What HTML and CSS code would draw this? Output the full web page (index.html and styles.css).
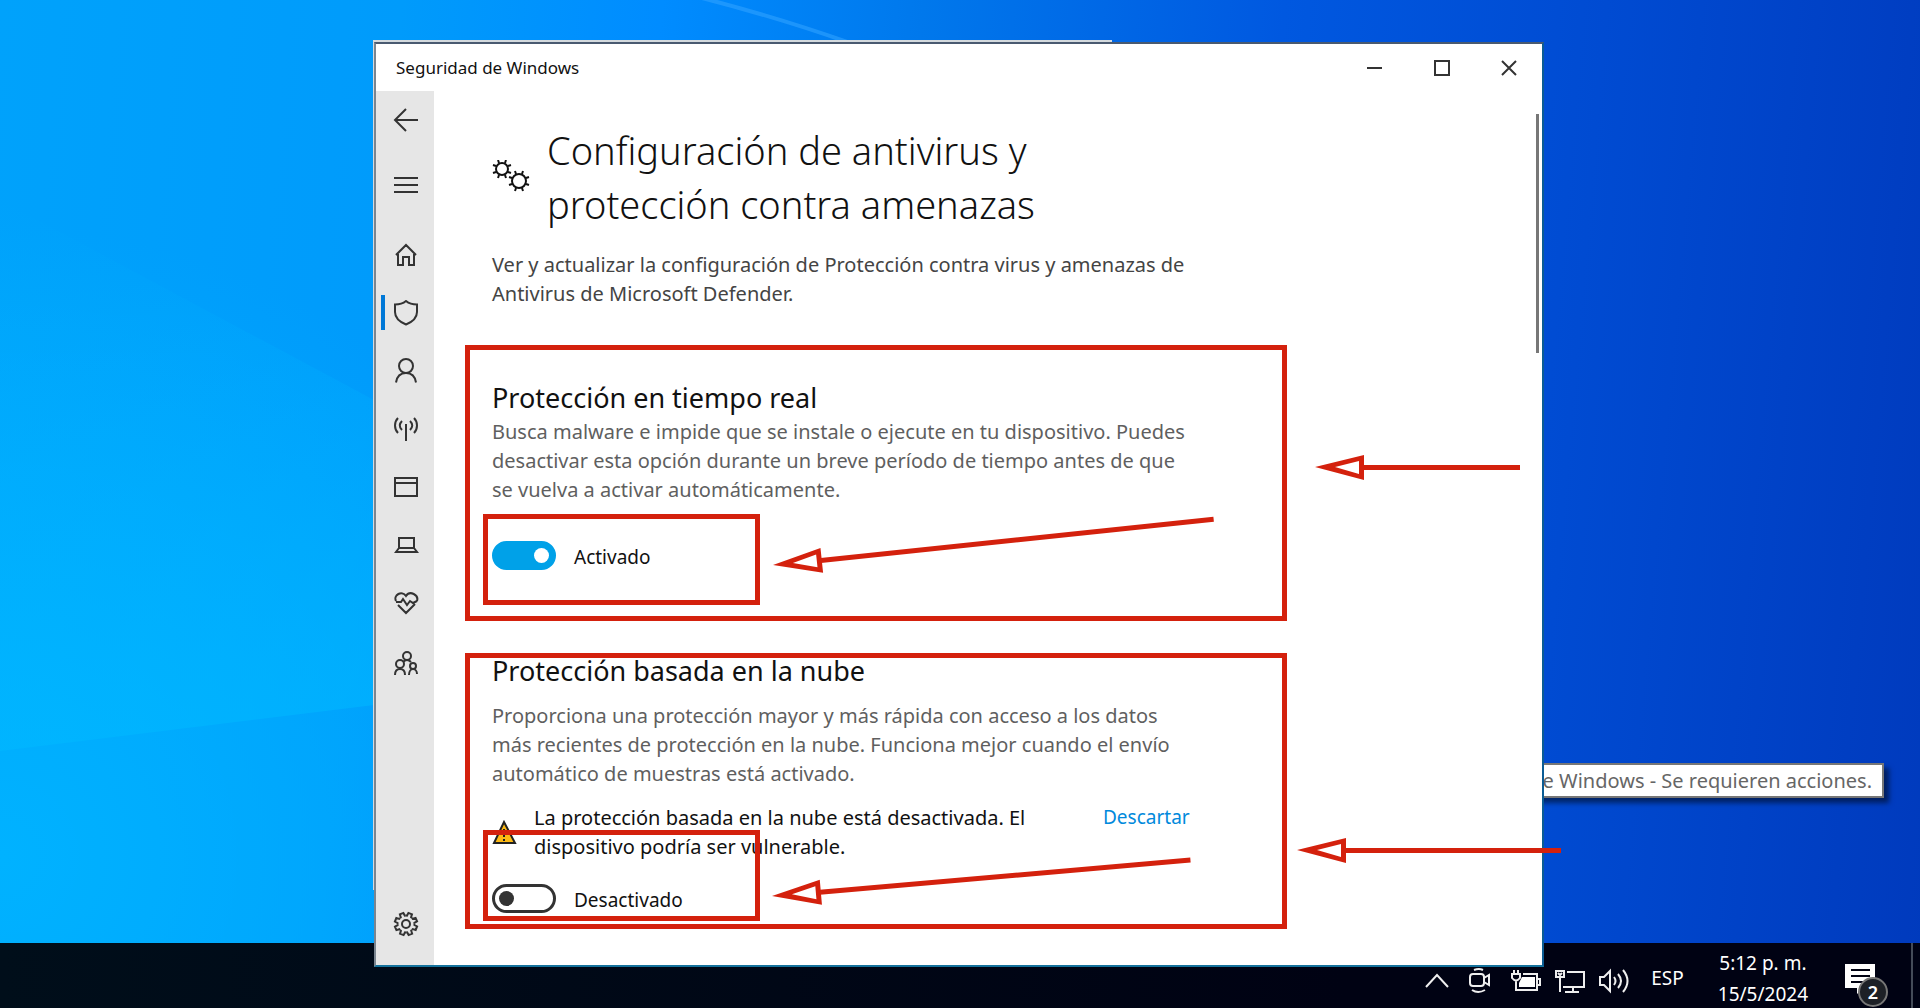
FILE: index.html
```html
<!DOCTYPE html>
<html lang="es">
<head>
    <meta charset="UTF-8">
    <meta name="viewport" content="width=device-width, initial-scale=1.0">
    <title>Seguridad de Windows</title>

    <link rel="stylesheet" href="styles.css">
</head>
<body>

    <!-- Fondo de escritorio -->
    <svg class="wallpaper" viewBox="0 0 1920 1008" preserveAspectRatio="none" aria-hidden="true">
        <defs>
            <linearGradient id="beam" x1="0" y1="0" x2="0" y2="1">
                <stop offset="0" stop-color="#00b8ff" stop-opacity="0"/>
                <stop offset="1" stop-color="#00b8ff" stop-opacity="0.6"/>
            </linearGradient>
        </defs>
        <path fill="url(#beam)" d="M0 200L374 400V705L0 751z"/>
        <path stroke="#2fa2ff" stroke-opacity="0.6" stroke-width="4" d="M698 -3Q780 18 850 43"/>
    </svg>

    <!-- Ventana principal -->
    <div class="window">
        <header class="titlebar">
            <span class="title">Seguridad de Windows</span>
            <div class="window-buttons">
                <button type="button" aria-label="Minimizar">
                    <svg width="16" height="16" viewBox="0 0 16 16"><path d="M0 8h15"/></svg>
                </button>
                <button type="button" aria-label="Maximizar">
                    <svg width="16" height="16" viewBox="0 0 16 16"><path d="M1 1h14v14H1z"/></svg>
                </button>
                <button type="button" aria-label="Cerrar">
                    <svg width="16" height="16" viewBox="0 0 16 16"><path d="M1 1l14 14M15 1L1 15"/></svg>
                </button>
            </div>
        </header>

        <div class="window-body">
            <!-- Barra lateral -->
            <nav class="sidebar">
                <a href="#" class="back" aria-label="Atrás">
                    <svg viewBox="0 0 26 26"><path d="M25 13H2M13 2L2 13l11 11"/></svg>
                </a>
                <a href="#" class="menu" aria-label="Menú">
                    <svg viewBox="0 0 26 26"><path d="M1 6h24M1 13h24M1 20h24"/></svg>
                </a>
                <a href="#" class="home" aria-label="Inicio">
                    <svg viewBox="0 0 26 26"><path d="M3 13L13 3l10 10M5 12v11h5v-8h6v8h5V12"/></svg>
                </a>
                <a href="#" class="active" aria-label="Protección contra virus y amenazas">
                    <svg viewBox="0 0 26 26"><path d="M13 1c3 2.500 7 3.500 11 3.500V12c0 6-5 10-11 12.500C7 22 2 18 2 12V4.500C6 4.500 10 3.500 13 1z"/></svg>
                </a>
                <a href="#" aria-label="Protección de cuentas">
                    <svg viewBox="0 0 26 26"><circle cx="13" cy="8" r="7"/><path d="M3 24.500C4 18 8 15 13 15s9 3 10 9.500"/></svg>
                </a>
                <a href="#" aria-label="Firewall y protección de red">
                    <svg viewBox="0 0 26 26"><path d="M13 8v17M5 2C1 6 1 13 5 17M9 5c-3 3-3 6 0 9M21 2c4 4 4 11 0 15M17 5c3 3 3 6 0 9"/></svg>
                </a>
                <a href="#" aria-label="Control de aplicaciones y navegador">
                    <svg viewBox="0 0 26 26"><path d="M2 4h22v18H2zM2 9h22"/></svg>
                </a>
                <a href="#" aria-label="Seguridad del dispositivo">
                    <svg viewBox="0 0 26 26"><path d="M6 6h15v10H6zM6 16l-3 4h21l-3-4"/></svg>
                </a>
                <a href="#" aria-label="Rendimiento y estado del dispositivo">
                    <svg viewBox="0 0 26 26"><path d="M3 11C0 5 9 0 13 6c4-6 13-1 11 5M3 12h5l2-3 4 6 3-4 3 2 4-2M5 15l8 8 9-9"/></svg>
                </a>
                <a href="#" class="family" aria-label="Opciones de familia">
                    <svg viewBox="0 0 26 26"><circle cx="14" cy="5" r="4"/><circle cx="7" cy="13" r="4"/><circle cx="20" cy="15" r="3"/><path d="M2 24c0-4 2-6 5-6s5 2 5 6M16 24c0-4 2-6 4-6s4 2 4 5M10 11q4-4 8 0"/></svg>
                </a>
                <a href="#" class="settings" aria-label="Configuración">
                    <svg viewBox="-13 -13 26 26">
                        <defs><path id="tooth" d="M-3.200-7.900L-2.200-8.200L-1.900-11.200H1.900L2.200-8.200L3.200-7.900"/></defs>
                        <circle r="4"/>
                        <use href="#tooth" transform="rotate(22)"/>
                        <use href="#tooth" transform="rotate(67)"/>
                        <use href="#tooth" transform="rotate(112)"/>
                        <use href="#tooth" transform="rotate(157)"/>
                        <use href="#tooth" transform="rotate(202)"/>
                        <use href="#tooth" transform="rotate(247)"/>
                        <use href="#tooth" transform="rotate(292)"/>
                        <use href="#tooth" transform="rotate(337)"/>
                    </svg>
                </a>
            </nav>

            <!-- Contenido -->
            <main class="content">
                <div class="page-header">
                    <svg class="gears" width="38" height="34" viewBox="0 0 38 34" aria-hidden="true">
                        <circle cx="10" cy="9" r="6"/>
                        <circle cx="27" cy="21" r="7"/>
                        <path d="M7 3L6 0M13 3l1-3M16 6l3-1M16 12l3 1M13 15l1 3M7 15l-1 3M4 12l-3 1M4 6L1 5"/>
                        <path d="M24 14l-1-3M30 14l1-3M34 18l3-1M34 24l3 1M30 28l1 3M24 28l-1 3M20 24l-3 1M20 18l-3-1"/>
                    </svg>
                    <h1>Configuración de antivirus y protección contra amenazas</h1>
                </div>
                <p class="intro">Ver y actualizar la configuración de Protección contra virus y amenazas de Antivirus de Microsoft Defender.</p>

                <section class="realtime">
                    <h2>Protección en tiempo real</h2>
                    <p>Busca malware e impide que se instale o ejecute en tu dispositivo. Puedes desactivar esta opción durante un breve período de tiempo antes de que se vuelva a activar automáticamente.</p>
                    <div class="toggle">
                        <input type="checkbox" id="realtime" checked>
                        <label for="realtime">Activado</label>
                    </div>
                    <div class="mark"></div>
                    <svg class="arrows" aria-hidden="true">
                        <defs><path id="head" fill-rule="evenodd" d="M0 0L49-12V13zM20 0L44 7V-6z"/></defs>
                        <g transform="translate(303 215) rotate(-6)"><use href="#head"/><path d="M48-2H443V3H48z"/></g>
                        <g transform="translate(845 117)"><use href="#head"/><path d="M48-2H205V3H48z"/></g>
                    </svg>
                </section>

                <section class="cloud">
                    <h2>Protección basada en la nube</h2>
                    <p>Proporciona una protección mayor y más rápida con acceso a los datos más recientes de protección en la nube. Funciona mejor cuando el envío automático de muestras está activado.</p>
                    <div class="warning">
                        <svg width="25" height="25" viewBox="0 0 25 25" aria-hidden="true">
                            <path d="M12 2l11 21H2z" fill="#fdb913" stroke="#222" stroke-width="2"/>
                            <path d="M12 9v8M12 19v2" stroke="#222" stroke-width="2"/>
                        </svg>
                        <span>La protección basada en la nube está desactivada. El dispositivo podría ser vulnerable.</span>
                        <a href="#">Descartar</a>
                    </div>
                    <div class="toggle">
                        <input type="checkbox" id="cloud">
                        <label for="cloud">Desactivado</label>
                    </div>
                    <div class="mark"></div>
                    <svg class="arrows" aria-hidden="true">
                        <g transform="translate(302 238) rotate(-5)"><use href="#head"/><path d="M48-2H420V3H48z"/></g>
                        <g transform="translate(827 192)"><use href="#head"/><path d="M48-2H264V3H48z"/></g>
                    </svg>
                </section>
                <div class="scrollbar"></div>
            </main>
        </div>
    </div>

    <div class="window-behind"></div>
    <div class="tooltip">Seguridad de Windows - Se requieren acciones.</div>

    <!-- Barra de tareas -->
    <footer class="taskbar">
        <button type="button" class="tray" aria-label="Mostrar iconos ocultos">
            <svg width="24" height="28" viewBox="0 0 24 28"><path d="M1 20L12 8l11 12"/></svg>
        </button>
        <button type="button" class="tray camera" aria-label="Reunirse ahora">
            <svg width="22" height="28" viewBox="0 0 22 28"><path d="M4 7h8q3 0 3 3v6q0 3-3 3H4q-3 0-3-3v-6q0-3 3-3zM15 11l5-3v10l-5-3M3 23q6 4 13 0M5 3q5-2 9 0"/></svg>
        </button>
        <button type="button" class="tray battery" aria-label="Batería">
            <svg width="30" height="28" viewBox="0 0 30 28"><path d="M3 3v4M7 3v4M1 7h8v4q-4 5-8 0zM5 13v10h21V7H12M27 12h2v6h-2"/><path d="M11 10h13v10H8v-4z" fill="#fff" stroke="none"/></svg>
        </button>
        <button type="button" class="tray network" aria-label="Red">
            <svg width="30" height="28" viewBox="0 0 30 28"><path d="M1 4h8v6H1zM5 10v15M12 5h17v15H8M18 20v5M10 25h14M3 6l2 2 2-2"/></svg>
        </button>
        <button type="button" class="tray sound" aria-label="Volumen">
            <svg width="32" height="28" viewBox="0 0 32 28"><path d="M1 10h4l6-6v20l-6-6H1zM15 10q3 4 0 8M19 7q6 7 0 14M24 3q9 11 0 22"/></svg>
        </button>
        <span class="lang">ESP</span>
        <div class="clock">
            <span>5:12 p. m.</span>
            <span>15/5/2024</span>
        </div>
        <button type="button" class="notifications" aria-label="Notificaciones">
            <svg width="30" height="30" viewBox="0 0 30 30"><path d="M0 0h30v24H18l-6 6v-6H0z" fill="#fff"/><path d="M6 6h19M6 12h19M6 18h12" stroke="#000213" stroke-width="2"/></svg>
            <span class="badge">2</span>
        </button>
    </footer>

</body>
</html>
```
FILE: styles.css
```css
* {
    box-sizing: border-box;
}

body {
    font-family: 'Noto Sans', 'Open Sans', sans-serif;
    font-size: 20px;
    line-height: 29px;
    margin: 0;
    min-height: 100vh;
    padding: 42px 0 41px;
    position: relative;
    color: #111;
    background:
        radial-gradient(circle at 0 85%, #00b2ff 0%, rgba(0,178,255,0) 30%),
        linear-gradient(95deg, #00a2fb 0%, #009bfb 20%, #008cff 33%, #0078ec 46%, #0058e0 64%, #004bd2 80%, #003abd 100%);
}

h1, h2, p {
    margin: 0;
    font-weight: 400;
}

button {
    background: none;
    border: none;
    padding: 0;
    cursor: pointer;
}

svg {
    fill: none;
    display: block;
}

.wallpaper {
    position: absolute;
    top: 0;
    left: 0;
    width: 100%;
    height: 100%;
}

/* Ventana */
.window {
    position: relative;
    z-index: 2;
    margin: 0 376px 0 374px;
    background: #fff;
    border: 2px solid #0b5c94;
    border-left-color: #7a8590;
    border-top-color: #4a5a70;
    border-bottom-color: #14729c;
}

.window-behind {
    position: absolute;
    z-index: 1;
    top: 40px;
    left: 373px;
    width: 739px;
    height: 850px;
    background: #d4dade;
}

.titlebar {
    display: flex;
    justify-content: space-between;
    align-items: center;
    height: 47px;
    padding-left: 20px;
}

.title {
    font-size: 17px;
}

.window-buttons {
    display: flex;
}

.window-buttons button {
    display: flex;
    justify-content: center;
    align-items: center;
    width: 67px;
    height: 47px;
}

.window-buttons svg {
    stroke: #333;
    stroke-width: 2;
}

.window-body {
    display: flex;
}

.sidebar {
    display: flex;
    flex-direction: column;
    width: 58px;
    padding-bottom: 12px;
    background: #e6e6e6;
}

.sidebar a {
    display: flex;
    justify-content: center;
    align-items: center;
    height: 58px;
    padding-left: 2px;
}

.sidebar svg {
    width: 26px;
    height: 26px;
    stroke: #333;
    stroke-width: 2;
}

.sidebar .menu {
    margin-top: 7px;
}

.sidebar .home {
    margin-top: 12px;
}

.sidebar .family {
    margin-top: 3px;
}

.sidebar .settings {
    margin-top: auto;
}

.sidebar .active {
    position: relative;
}

.sidebar .active::before {
    content: '';
    position: absolute;
    left: 5px;
    top: 11px;
    width: 4px;
    height: 35px;
    background: #0078d7;
}

/* Contenido */
.content {
    position: relative;
    flex: 1;
    padding: 32px 31px 36px;
}

.page-header {
    display: flex;
    align-items: center;
    gap: 17px;
    max-width: 640px;
    padding-left: 27px;
}

.gears {
    flex: none;
    stroke: #111;
    stroke-width: 2;
}

h1 {
    font-size: 38px;
    font-weight: 300;
    line-height: 54px;
}

.intro {
    max-width: 770px;
    margin: 19px 0 37px;
    padding-left: 27px;
    color: #444;
}

section {
    position: relative;
    max-width: 822px;
    padding: 0 70px 0 22px;
    border: 5px solid #d4210d;
}

h2 {
    font-size: 27px;
    line-height: 26px;
}

section p {
    max-width: 700px;
    color: #5f5f5f;
}

.realtime {
    padding-top: 35px;
    padding-bottom: 46px;
    margin-bottom: 32px;
}

.realtime p {
    margin: 6px 0 37px;
}

.cloud {
    padding-bottom: 11px;
}

.cloud p {
    margin: 17px 0 15px;
}

.warning {
    display: flex;
    align-items: flex-start;
    margin-bottom: 23px;
}

.warning svg {
    flex: none;
    margin: 17px 17px 0 0;
}

.warning span {
    flex: none;
    width: 520px;
    margin-right: 49px;
}

.warning a {
    font-size: 19px;
    color: #0089dc;
    text-decoration: none;
}

.toggle {
    display: flex;
    align-items: center;
    gap: 18px;
    height: 29px;
}

.toggle label {
    padding-top: 3px;
    font-size: 19px;
}

.toggle input {
    appearance: none;
    position: relative;
    width: 64px;
    height: 29px;
    margin: 0;
    border: 3px solid #333;
    border-radius: 15px;
}

.toggle input::before {
    content: '';
    position: absolute;
    top: 4px;
    left: 4px;
    width: 15px;
    height: 15px;
    border-radius: 50%;
    background: #333;
}

.toggle input:checked {
    background: #00a1e8;
    border-color: #00a1e8;
}

.toggle input:checked::before {
    left: 39px;
    background: #fff;
}

/* Marcas rojas */
.mark {
    position: absolute;
    left: 13px;
    width: 277px;
    height: 91px;
    border: 5px solid #d4210d;
}

.realtime .mark {
    top: 164px;
}

.cloud .mark {
    top: 172px;
}

.arrows {
    position: absolute;
    top: 0;
    left: 0;
    width: 100%;
    height: 100%;
    overflow: visible;
    pointer-events: none;
    fill: #d4210d;
}

.scrollbar {
    position: absolute;
    top: 23px;
    right: 3px;
    width: 3px;
    height: 239px;
    background: #777;
}

.tooltip {
    position: absolute;
    z-index: 1;
    right: 36px;
    bottom: 210px;
    padding: 1px 10px 1px;
    background: #fff;
    border: 2px solid #777;
    color: #666;
    white-space: nowrap;
    box-shadow: 5px 5px 5px rgba(0,0,0,0.5);
}

/* Barra de tareas */
.taskbar {
    position: absolute;
    left: 0;
    right: 0;
    bottom: 0;
    height: 65px;
    display: flex;
    justify-content: flex-end;
    align-items: center;
    padding-right: 7px;
    color: #fff;
    background: linear-gradient(90deg, #000e1a, #000213 70%);
}

.tray {
    margin: 10px 20px 0 0;
}

.tray svg {
    stroke: #eee;
    stroke-width: 2;
}

.battery, .network {
    margin-right: 14px;
}

.lang {
    padding-top: 6px;
    font-size: 19px;
}

.clock {
    display: flex;
    flex-direction: column;
    align-items: center;
    margin: 6px 37px 0 34px;
    font-size: 19px;
    line-height: 31px;
}

.notifications {
    position: relative;
    height: 65px;
    padding: 6px 36px 0 0;
    border-right: 2px solid #444b58;
}

.badge {
    position: absolute;
    left: 13px;
    top: 34px;
    width: 30px;
    height: 30px;
    border: 2px solid #777;
    border-radius: 50%;
    background: #1d2026;
    color: #fff;
    font: 600 18px/26px 'Noto Sans', sans-serif;
}
```
